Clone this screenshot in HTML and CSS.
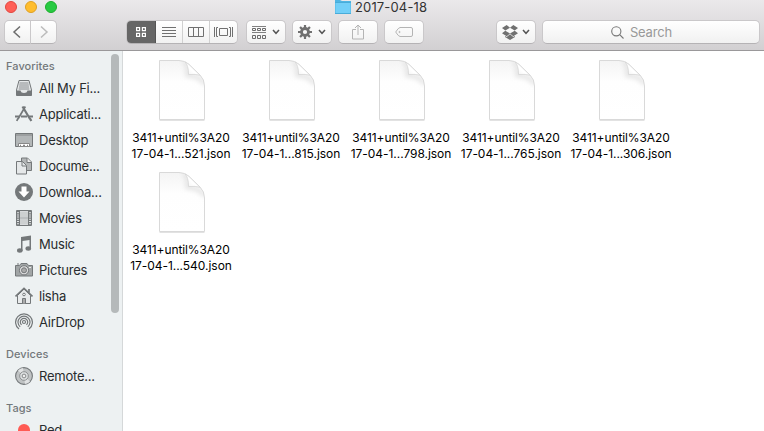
FILE: index.html
```html
<!DOCTYPE html>
<html lang="en">
<head>
<meta charset="utf-8">
<title>2017-04-18</title>
<link rel="stylesheet" href="styles.css">
</head>
<body>
<svg class="defs" width="0" height="0">
  <defs>
    <linearGradient id="shade" x1="0" y1="0" x2="0" y2="1"><stop offset="0" stop-color="#f4f4f4"/><stop offset=".35" stop-color="#fefefe"/><stop offset="1" stop-color="#fff"/></linearGradient>
    <linearGradient id="fold" x1="1" y1="0" x2="0" y2="1"><stop offset="0" stop-color="#fff"/><stop offset=".6" stop-color="#fff"/><stop offset="1" stop-color="#f0f0f0"/></linearGradient>
    <filter id="soft" x="-30%" y="-30%" width="160%" height="160%"><feGaussianBlur stdDeviation="2.800"/></filter>
    <clipPath id="page"><path d="M3.500 2.500H23Q29 2.500 33 6.500L44 17Q48.500 21.500 48.500 28V61.500H3.500Z"/></clipPath>
    <symbol id="document" viewBox="0 0 52 66">
      <path d="M3.500 62.500H48.500" stroke="#e2e2e2"/>
      <path d="M3.500 2.500H23Q29 2.500 33 6.500L44 17Q48.500 21.500 48.500 28V61.500H3.500Z" fill="url(#shade)" stroke="#d9d9d9"/>
      <g clip-path="url(#page)"><path d="M28 3Q32 6 31.500 17.500Q42 17 49 26" fill="none" stroke="#dadada" stroke-width="3" filter="url(#soft)"/></g>
      <path d="M29 4Q32.500 7 32.500 16.500Q40 16 44 17.200L33 6.500Q31 4.600 29 4Z" fill="url(#fold)" stroke="#d6d6d6" stroke-width=".8"/>
    </symbol>
    <symbol id="chevron" viewBox="0 0 8 6"><path d="M1 1L4 4.300L7 1" fill="none" stroke="#555" stroke-width="1.500"/></symbol>
  </defs>
</svg>

<header class="toolbar">
  <div class="titlebar">
    <div class="lights"><i class="light close"></i><i class="light minimize"></i><i class="light zoom"></i></div>
    <div class="title">
      <svg width="16" height="14" viewBox="0 0 16 14"><path d="M0 0H5L7 1H16V14H0Z" fill="#4fb5e3"/><path d="M.5 3H15.500V13H.500Z" fill="#72cff8"/><path d="M0 2.500H16M0 13.500H16" stroke="#49acd9"/></svg>
      <span>2017-04-18</span>
    </div>
  </div>
  <div class="controls">
    <div class="nav">
      <button class="button back"><svg width="10" height="14" viewBox="0 0 10 14"><path d="M8 1.500L2 7L8 12.500" fill="none" stroke="#6c6c6c" stroke-width="1.500"/></svg></button>
      <button class="button forward"><svg width="10" height="14" viewBox="0 0 10 14"><path d="M2 1.500L8 7L2 12.500" fill="none" stroke="#bbb" stroke-width="1.500"/></svg></button>
    </div>
    <div class="views">
      <span class="view selected"><svg width="10" height="10" viewBox="0 0 10 10" fill="none" stroke="#fff" stroke-width="1.200"><path d="M.600.600h3v3h-3zM6.400.600h3v3h-3zM.600 6.400h3v3h-3zM6.400 6.400h3v3h-3z"/></svg></span>
      <span class="view list"><svg width="14" height="10" viewBox="0 0 14 10" stroke="#707070"><path d="M0 .5H14M0 3.500H14M0 6.500H14M0 9.500H14"/></svg></span>
      <span class="view columns"><svg width="16" height="10" viewBox="0 0 16 10" fill="none" stroke="#707070"><path d="M.5.500h15v9H.500zM5.500.500v9M10.500.500v9"/></svg></span>
      <span class="view flow"><svg width="19" height="10" viewBox="0 0 19 10" fill="none" stroke="#707070"><path d="M.5 0v10M4 .5H2.500v9H4M5.500 1.500h8v7h-8zM15 .5h1.500v9H15M18.500 0v10"/></svg></span>
    </div>
    <span class="button menu arrange"><svg width="14" height="13" viewBox="0 0 14 13" fill="none" stroke="#6b6b6b"><path d="M0 .5H14M0 6.500H14" stroke-opacity=".85"/><path d="M.5 2.500h3v2h-3zM5.500 2.500h3v2h-3zM10.500 2.500h3v2h-3zM.5 9.500h3v3h-3zM5.500 9.500h3v3h-3zM10.500 9.500h3v3h-3z"/></svg><svg width="8" height="6"><use href="#chevron"/></svg></span>
    <span class="button menu action"><svg width="14" height="14" viewBox="0 0 14 14" fill="none" stroke="#707070"><circle cx="7" cy="7" r="3.500" stroke-width="2.800"/><path d="M7 0v3M7 11v3M0 7h3M11 7h3M2.050 2.050l2.100 2.100M9.850 9.850l2.100 2.100M11.950 2.050l-2.100 2.100M4.150 9.850l-2.100 2.100" stroke-width="2.200"/></svg><svg width="8" height="6"><use href="#chevron"/></svg></span>
    <span class="button share"><svg width="12" height="16" viewBox="0 0 12 16" fill="none" stroke="#b4b4b4"><path d="M4 5.500H.500v9.500h11V5.500H8M6 11V1M3 4L6 1l3 3"/></svg></span>
    <span class="button tag"><svg width="18" height="10" viewBox="0 0 18 10" fill="none" stroke="#b4b4b4"><path d="M5 .5H16Q17.500.500 17.500 2V8Q17.500 9.500 16 9.500H5Q3.500 9.500.700 5Q3.500.500 5 .5Z"/><circle cx="4.500" cy="5" r=".6"/></svg></span>
    <span class="button menu dropbox"><svg width="16" height="15" viewBox="0 0 16 15" fill="#707070"><path d="M4.700 0L8 2.700L3.300 5.600L0 3ZM11.300 0L16 3L12.700 5.600L8 2.700ZM0 8.300L3.300 5.700L8 8.500L4.700 11.200ZM12.700 5.700L16 8.300L11.300 11.200L8 8.500ZM8 9.200L11.300 12L13 11V12L8 15L3 12V11L4.700 12Z"/></svg><svg width="8" height="6"><use href="#chevron"/></svg></span>
    <div class="search"><svg width="13" height="13" viewBox="0 0 13 13" fill="none" stroke="#777" stroke-width="1.100"><circle cx="5.300" cy="5.300" r="4.600"/><path d="M8.700 8.700L12.500 12.500"/></svg><span>Search</span></div>
  </div>
</header>

<main class="content">
  <aside class="sidebar">
    <h2>Favorites</h2>
    <ul>
      <li><svg viewBox="0 0 18 18"><path d="M4 1.500H14L16.500 11V16.500H1.500V11Z" fill="#e5e8e9" stroke="#74787a"/><path d="M4.500 4H13.500M4.200 6H13.800M4 8H14M3.700 10H14.300" stroke="#808486" stroke-width=".9"/><path d="M1.500 11.500H5.500Q6 14 9 14T12.500 11.500H16.500V16.500H1.500Z" fill="#74787a"/></svg><span>All My Fi...</span></li>
      <li><svg viewBox="0 0 18 18" fill="none" stroke="#74787a"><path d="M10.300 1.500L3 14M2.800 13.500L1.800 16" stroke-width="1.700"/><path d="M7.500 1.500L15 14M15 13.500L16.300 16" stroke-width="2.200"/><path d="M0 11.500H4M6 11.500H12M14 11.500H18" stroke-width="1.800"/></svg><span>Applicati...</span></li>
      <li><svg viewBox="0 0 18 18"><path d="M.5 2.500H17.500V15.500H.500Z" fill="#b3b7b8" stroke="#74787a"/><path d="M1 4H17" stroke="#858889"/><path d="M3.500 12.500H14.500V15.500H3.500Z" fill="#fff" stroke="#888"/><path d="M5 14.500H6M8 14.500H10M12 14.500H13" stroke="#888" stroke-width="1.500"/></svg><span>Desktop</span></li>
      <li><svg viewBox="0 0 18 18" stroke="#74787a"><path d="M6.500 1H12.500L16.500 5V13.500H6.500Z" fill="#b3b6b7"/><path d="M12 1V5.500H16.500" fill="#eee"/><path d="M1.500 4.500H7.500L11.500 8.500V17H1.500Z" fill="#e5e8e9"/><path d="M7 4.500V9H11.500" fill="none"/></svg><span>Docume...</span></li>
      <li><svg viewBox="0 0 18 18"><circle cx="9" cy="9" r="9" fill="#74787a"/><path d="M6.500 3.500H11.500V8.500H14.500L9 14.500L3.500 8.500H6.500Z" fill="#fff"/></svg><span>Downloa...</span></li>
      <li><svg viewBox="0 0 18 18"><path d="M1.500 1.500H16.500V16.500H1.500Z" fill="#e2e5e6" stroke="#74787a"/><path d="M4.500 1V17M13.500 1V17M4.500 9H13.500" stroke="#74787a"/><path d="M3 2V16M15 2V16" stroke="#74787a" stroke-width="2" stroke-dasharray="1.200 1"/><path d="M5 2.500H13V8.500H5ZM5 9.500H13V15.500H5Z" fill="#cdd0d1"/></svg><span>Movies</span></li>
      <li><svg viewBox="0 0 18 18"><path d="M6 2L16 .5V13.500H14.500V5L7.500 6V16H6Z" fill="#74787a"/><ellipse cx="4.800" cy="15.500" rx="2.800" ry="2.200" fill="#74787a"/><ellipse cx="13.300" cy="13.500" rx="2.800" ry="2.200" fill="#74787a"/></svg><span>Music</span></li>
      <li><svg viewBox="0 0 18 18"><path d="M.5 4.500H4.500L6 2.500H12L13.500 4.500H17.500V15H.500Z" fill="#a1a5a6" stroke="#74787a"/><path d="M2 3H4" stroke="#74787a"/><circle cx="9" cy="9.300" r="4.600" fill="#ddd" stroke="#74787a"/><circle cx="9" cy="9.300" r="2.500" fill="#aaa" stroke="#74787a"/><path d="M14 6.500H16" stroke="#eee"/></svg><span>Pictures</span></li>
      <li><svg viewBox="0 0 18 18"><path d="M2.500 8.500L9 2L15.500 8.500V16.500H2.500Z" fill="#e8eaeb" stroke="#74787a"/><path d="M.5 9.500L9 1.500L17.500 9.500M14 2V6" fill="none" stroke="#74787a" stroke-width="1.700"/><path d="M7.500 16.500V11.500H10.500V16.500" fill="#aaa" stroke="#74787a"/><circle cx="9" cy="7.500" r="1.300" fill="#fff" stroke="#74787a"/></svg><span>lisha</span></li>
      <li><svg viewBox="0 0 18 18" fill="none" stroke="#74787a" stroke-width="1.200"><path d="M4 16A8.400 8.400 0 1 1 14 16M5.200 13.800A6 6 0 1 1 12.800 13.800M6.600 11.900A3.700 3.700 0 1 1 11.400 11.900"/><circle cx="9" cy="9" r="1.500"/></svg><span>AirDrop</span></li>
    </ul>
    <h2>Devices</h2>
    <ul>
      <li><svg viewBox="0 0 18 18"><circle cx="9" cy="9" r="8.400" fill="#c0c3c4" stroke="#74787a" stroke-width="1.100"/><path d="M9 9L3 3.500A8 8 0 0 1 8 1ZM9 9L15 14.500A8 8 0 0 1 10 17Z" fill="#e0e2e3"/><circle cx="9" cy="9" r="4.300" fill="#dfe2e3" stroke="#858889" stroke-width=".9"/><circle cx="9" cy="9" r="1.900" fill="#eee" stroke="#858889"/></svg><span>Remote...</span></li>
    </ul>
    <h2>Tags</h2>
    <ul>
      <li><svg viewBox="0 0 18 18"><circle cx="9" cy="9" r="6" fill="#ff5b54"/></svg><span>Red</span></li>
    </ul>
    <div class="scrollbar"></div>
  </aside>
  <section class="files">
    <figure><svg width="52" height="66"><use href="#document"/></svg><figcaption><span class="first">3411+until%3A20</span><span class="second">17-04-1...521.json</span></figcaption></figure>
    <figure><svg width="52" height="66"><use href="#document"/></svg><figcaption><span class="first">3411+until%3A20</span><span class="second">17-04-1...815.json</span></figcaption></figure>
    <figure><svg width="52" height="66"><use href="#document"/></svg><figcaption><span class="first">3411+until%3A20</span><span class="second">17-04-1...798.json</span></figcaption></figure>
    <figure><svg width="52" height="66"><use href="#document"/></svg><figcaption><span class="first">3411+until%3A20</span><span class="second">17-04-1...765.json</span></figcaption></figure>
    <figure><svg width="52" height="66"><use href="#document"/></svg><figcaption><span class="first">3411+until%3A20</span><span class="second">17-04-1...306.json</span></figcaption></figure>
    <figure><svg width="52" height="66"><use href="#document"/></svg><figcaption><span class="first">3411+until%3A20</span><span class="second">17-04-1...540.json</span></figcaption></figure>
  </section>
</main>
</body>
</html>
```
FILE: styles.css
```css
* { box-sizing: border-box; }
body { margin: 0; width: 764px; height: 431px; overflow: hidden; background: #fff; font-family: Inter, "Liberation Sans", sans-serif; font-size: 13px; color: #222; }
svg { display: block; flex: none; }
.defs { position: absolute; }
.toolbar { height: 51px; background: linear-gradient(#ebe9eb, #d2d0d2); border-bottom: 1px solid #9a989a; }
.titlebar { height: 20px; display: flex; }
.lights { width: 335px; padding: 1px 0 0 5px; display: flex; gap: 8px; }
.light { width: 12px; height: 12px; border-radius: 50%; border: 1px solid; }
.close { background: #ff5f57; border-color: #e2463f; }
.minimize { background: #ffbd2e; border-color: #dfa023; }
.zoom { background: #28ca42; border-color: #1dad2c; }
.title { display: flex; gap: 4px; height: 14px; line-height: 15px; color: #333; letter-spacing: .15px; white-space: nowrap; }
.controls { display: flex; height: 24px; padding-left: 4px; }
.button, .views, .search { height: 24px; background: linear-gradient(#fff, #f1f1f1); border: 1px solid #cac8ca; border-bottom-color: #b5b3b5; border-radius: 5px; display: flex; align-items: center; justify-content: center; padding: 0; flex: none; }
.nav { display: flex; margin-right: 69px; }
.back { width: 27px; border-radius: 5px 0 0 5px; padding-right: 2px; }
.forward { width: 26px; border-left: 0; border-radius: 0 5px 5px 0; }
.views { width: 112px; margin-right: 8px; justify-content: flex-start; overflow: hidden; }
.view { height: 24px; flex: none; display: flex; align-items: center; justify-content: center; border-right: 1px solid #d0d0d0; }
.selected { width: 30px; margin-left: -1px; background: #666; border-color: #555; }
.list { width: 27px; }
.columns { width: 27px; }
.flow { width: 27px; border: 0; }
.menu { width: 40px; gap: 6px; }
.arrange, .action { margin-right: 6px; }
.share, .tag { width: 40px; }
.share { margin-right: 6px; padding-bottom: 1px; }
.tag { margin-right: 72px; }
.dropbox { gap: 4px; margin-right: 6px; }
.search { width: 218px; gap: 6px; padding-right: 19px; color: #999; letter-spacing: -.15px; }
.content { height: 380px; display: flex; }
.sidebar { width: 123px; flex: none; position: relative; overflow: hidden; background: #edf1f2; border-right: 1px solid #d5d8d9; padding-top: 6px; }
.sidebar h2 { margin: 0; padding-left: 6px; height: 18px; line-height: 18px; font-size: 11px; font-weight: 500; color: #73787b; letter-spacing: .05px; }
.sidebar ul { list-style: none; margin: 0 0 10px; padding: 0; }
.sidebar li { height: 26px; padding-left: 15px; display: flex; align-items: center; gap: 6px; color: #292c2e; white-space: nowrap; letter-spacing: -.22px; }
.sidebar li svg { width: 18px; height: 18px; }
.scrollbar { position: absolute; top: 3px; right: 3px; width: 8px; height: 259px; border-radius: 4px; background: #b5b9ba; }
.files { width: 550px; padding: 7px 0 0; margin-left: 4px; display: grid; grid-template-columns: repeat(5, 110px); grid-auto-rows: 112px; }
.files figure { margin: 0; display: flex; flex-direction: column; align-items: center; }
.files figcaption { margin-top: 6px; padding-right: 2px; line-height: 16px; font-size: 12px; color: #000; text-align: center; white-space: nowrap; }
.files figcaption span { display: block; }
.first { letter-spacing: -.1px; }
.second { letter-spacing: -.04px; }
```
